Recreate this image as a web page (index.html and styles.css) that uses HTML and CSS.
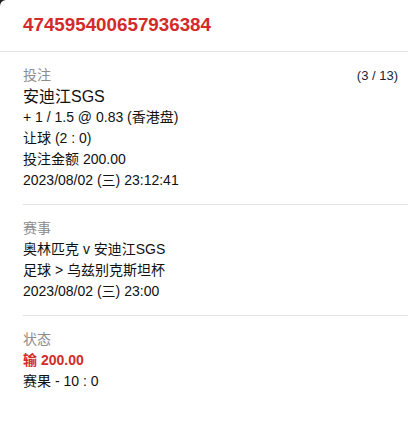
FILE: index.html
```html
<!DOCTYPE html>
<html lang="zh">
<head>
<meta charset="utf-8">
<link rel="stylesheet" href="styles.css">
</head>
<body>
<div class="panel">
  <header class="header">
    <h1 class="bet-id">474595400657936384</h1>
  </header>
  <section class="section">
    <div class="label-row">
      <span class="label">投注</span>
      <span class="count">(3 / 13)</span>
    </div>
    <div class="title">安迪江SGS</div>
    <div class="line">+ 1 / 1.5 @ 0.83 (香港盘)</div>
    <div class="line">让球 (2 : 0)</div>
    <div class="line">投注金额 200.00</div>
    <div class="line">2023/08/02 (三) 23:12:41</div>
  </section>
  <section class="section">
    <div class="label">赛事</div>
    <div class="line">奥林匹克 v 安迪江SGS</div>
    <div class="line">足球 &gt; 乌兹别克斯坦杯</div>
    <div class="line">2023/08/02 (三) 23:00</div>
  </section>
  <section class="section">
    <div class="label">状态</div>
    <div class="line loss">输 200.00</div>
    <div class="line">赛果 - 10 : 0</div>
  </section>
</div>
</body>
</html>
```

FILE: styles.css
```css
html {
  background: #1e1e1e;
}
body {
  margin: 0;
  font-family: "Liberation Sans", Arial, "Noto Sans CJK SC", sans-serif;
  color: #111;
}
.panel {
  background: #fff;
  min-height: 426px;
  border-top-left-radius: 6px;
}
.header {
  height: 52px;
  box-sizing: border-box;
  border-bottom: 1px solid #e3e3e3;
  padding: 0 23px;
  display: flex;
  align-items: center;
}
.bet-id {
  margin: 0;
  font-size: 18.8px;
  font-weight: bold;
  color: #d42a2a;
  padding-bottom: 1px;
}
.section {
  margin-left: 23px;
  padding: 13px 10px 13px 0;
  border-bottom: 1px solid #e3e3e3;
}
.section:last-child {
  border-bottom: none;
}
.label-row {
  display: flex;
  justify-content: space-between;
  align-items: center;
}
.label {
  font-size: 14px;
  line-height: 21px;
  color: #8c8c8c;
}
.count {
  font-size: 13px;
  color: #1c1c3a;
}
.title {
  font-size: 16px;
  line-height: 21px;
}
.line {
  font-size: 14px;
  line-height: 21px;
}
.loss {
  color: #d42a2a;
  font-weight: bold;
}
```
